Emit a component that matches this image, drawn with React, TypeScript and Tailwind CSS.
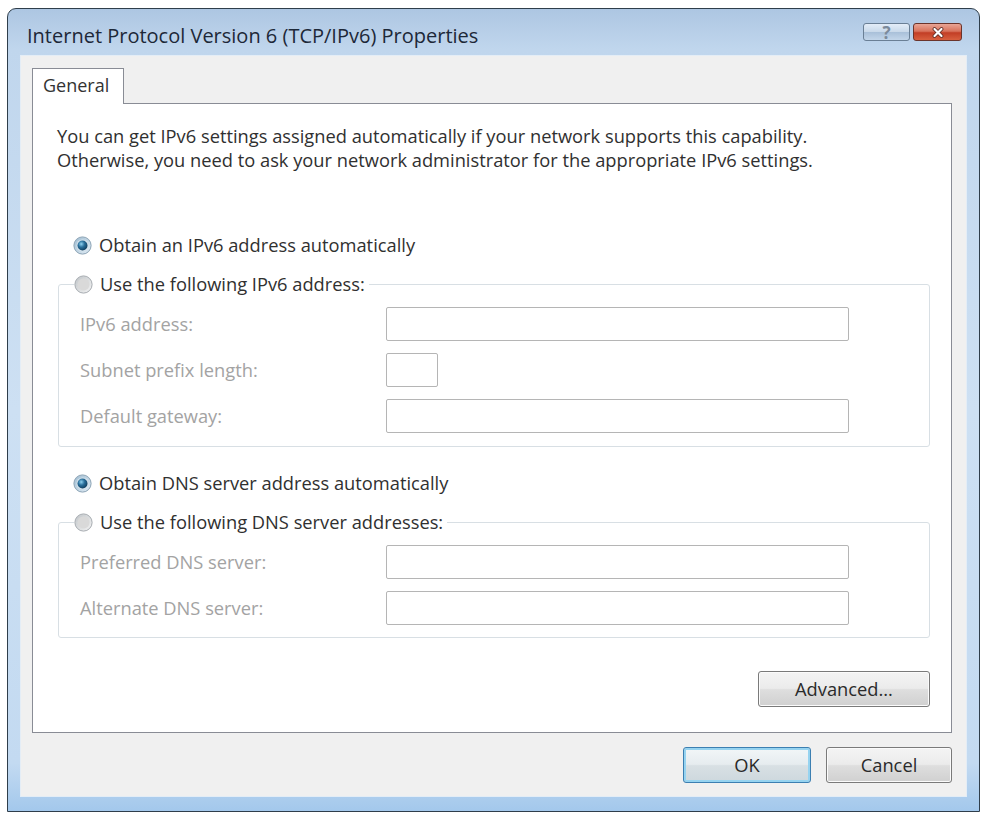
import React from "react";

type tRadio = {
  checked?: boolean;
};

function Radio({ checked }: tRadio) {
  return (
    <svg width="19" height="19" viewBox="0 0 19 19" className="shrink-0">
      <defs>
        <linearGradient id="radio-ring" x1="0" y1="0" x2="1" y2="1">
          <stop offset="0" stopColor="#bfc4c8" />
          <stop offset="1" stopColor="#f4f4f4" />
        </linearGradient>
        <linearGradient id="radio-ring-on" x1="0" y1="0" x2="1" y2="1">
          <stop offset="0" stopColor="#9fbcd1" />
          <stop offset="1" stopColor="#e2edf5" />
        </linearGradient>
        <radialGradient id="radio-dot" cx="0.38" cy="0.35" r="0.7">
          <stop offset="0" stopColor="#8fd2f0" />
          <stop offset="0.45" stopColor="#2a709c" />
          <stop offset="1" stopColor="#0e3a5a" />
        </radialGradient>
      </defs>
      <circle
        cx="9.5"
        cy="9.5"
        r="8.6"
        fill={checked ? "url(#radio-ring-on)" : "url(#radio-ring)"}
        stroke={checked ? "#8aa2b4" : "#a6abb0"}
      />
      <circle cx="9.5" cy="9.5" r="6" fill={checked ? "#d8e5ee" : "#d9d9d9"} />
      {checked && <circle cx="9.5" cy="9.5" r="5" fill="url(#radio-dot)" />}
    </svg>
  );
}

type tField = {
  label: string;
  short?: boolean;
};

function Field({ label, short }: tField) {
  return (
    <div className="flex h-[34px] items-center">
      <span className="w-[306px] shrink-0 text-[#a3a3a3]">{label}</span>
      <div
        className={
          short
            ? "h-[34px] w-[52px] rounded-[2px] border border-[#b5b5b5] bg-white"
            : "h-[34px] w-[463px] rounded-[2px] border border-[#b5b5b5] bg-white"
        }
      />
    </div>
  );
}

const btn =
  "flex h-[36px] items-center justify-center rounded-[3px] border border-[#7a7a7a] bg-[linear-gradient(to_bottom,#f4f4f4_0%,#ebebeb_48%,#dedede_52%,#d0d0d0_100%)] text-[#2a2a2a] shadow-[inset_0_0_0_1px_#fbfbfb]";

export default function App() {
  return (
    <div className="h-[817px] w-[984px] bg-white pl-[7px] pt-[8px] font-['Open_Sans',sans-serif] text-[18.3px] leading-[24px]">
      <div className="flex h-[804px] w-[973px] flex-col rounded-t-[9px] border border-[#2f3e4b] bg-[linear-gradient(to_bottom,#adc6e2_0%,#c0d6ed_40px,#cde0f3_50%,#c3daf1_94%,#a3c8ec_100%)] px-[12px] pb-[14px]">
        {/* title bar */}
        <div className="flex h-[46px] shrink-0 items-start justify-between">
          <span className="pl-[7px] pt-[13px] text-[20px] leading-[28px] text-[#1d2838]">
            Internet Protocol Version 6 (TCP/IPv6) Properties
          </span>
          <div className="mr-[5px] mt-[14px] flex gap-[3px]">
            <div className="flex h-[18px] w-[47px] items-center justify-center rounded-[3px] border border-[#6a7f95] bg-[linear-gradient(to_bottom,#e3edf8_0%,#c9d9ea_48%,#a9c0d9_52%,#c3d6ea_100%)] pt-[1px] text-[17px] leading-none font-bold text-[#7b8a9b]">
              ?
            </div>
            <div className="flex h-[18px] w-[49px] items-center justify-center rounded-[3px] border border-[#6b342b] bg-[linear-gradient(to_bottom,#e9a595_0%,#d8735c_45%,#c23e25_55%,#d8603f_100%)]">
              <svg width="14" height="11" viewBox="0 0 14 11">
                <path
                  d="M3.5 2 L10.5 9 M10.5 2 L3.5 9"
                  stroke="#5a2a22"
                  strokeWidth="3.8"
                  strokeLinecap="round"
                />
                <path
                  d="M3.5 2 L10.5 9 M10.5 2 L3.5 9"
                  stroke="#ffffff"
                  strokeWidth="2.2"
                  strokeLinecap="round"
                />
              </svg>
            </div>
          </div>
        </div>

        {/* client area */}
        <div className="flex flex-1 flex-col border border-[#e4edf6] bg-[#f0f0f0] pl-[11px] pr-[14px] pt-[12px]">
          <div className="relative z-10 -mb-px flex h-[36px] w-[92px] border border-b-0 border-[#898c95] bg-white pl-[10px] pt-[4px] text-[18px] text-[#333333]">
            General
          </div>
          <div className="flex h-[630px] w-[920px] flex-col border border-[#898c95] bg-white pl-[24px] pr-[21px] pt-[20px] text-[#303030]">
            <p className="whitespace-nowrap">
              You can get IPv6 settings assigned automatically if your network
              supports this capability.
              <br />
              Otherwise, you need to ask your network administrator for the
              appropriate IPv6 settings.
            </p>

            <div className="mt-[61px] flex h-[24px] items-center gap-[7px] pl-[16px]">
              <Radio checked />
              <span>Obtain an IPv6 address automatically</span>
            </div>

            <fieldset className="ml-px mt-[15px] rounded-[3px] border border-[#d8dfe4] pb-[13px]">
              <legend className="ml-[15px] flex h-[24px] items-center gap-[7px] pr-[4px]">
                <Radio />
                <span>Use the following IPv6 address:</span>
              </legend>
              <div className="flex flex-col gap-[12px] pl-[21px] pt-[11px]">
                <Field label="IPv6 address:" />
                <Field label="Subnet prefix length:" short />
                <Field label="Default gateway:" />
              </div>
            </fieldset>

            <div className="mt-[24px] flex h-[24px] items-center gap-[7px] pl-[16px]">
              <Radio checked />
              <span>Obtain DNS server address automatically</span>
            </div>

            <fieldset className="ml-px mt-[15px] rounded-[3px] border border-[#d8dfe4] pb-[12px]">
              <legend className="ml-[15px] flex h-[24px] items-center gap-[7px] pr-[4px]">
                <Radio />
                <span>Use the following DNS server addresses:</span>
              </legend>
              <div className="flex flex-col gap-[12px] pl-[21px] pt-[11px]">
                <Field label="Preferred DNS server:" />
                <Field label="Alternate DNS server:" />
              </div>
            </fieldset>

            <div className="mt-[33px] flex justify-end">
              <button className={`${btn} w-[172px]`}>Advanced...</button>
            </div>
          </div>

          <div className="mt-[14px] flex justify-end gap-[15px]">
            <button className="flex h-[36px] w-[128px] items-center justify-center rounded-[3px] border border-[#3c7fb1] bg-[linear-gradient(to_bottom,#f2f6f8_0%,#e6ecef_48%,#d8e0e4_52%,#cdd8dd_100%)] text-[#2a2a2a] shadow-[inset_0_0_0_2px_#96d3f0]">
              OK
            </button>
            <button className={`${btn} w-[126px]`}>Cancel</button>
          </div>
        </div>
      </div>
    </div>
  );
}
